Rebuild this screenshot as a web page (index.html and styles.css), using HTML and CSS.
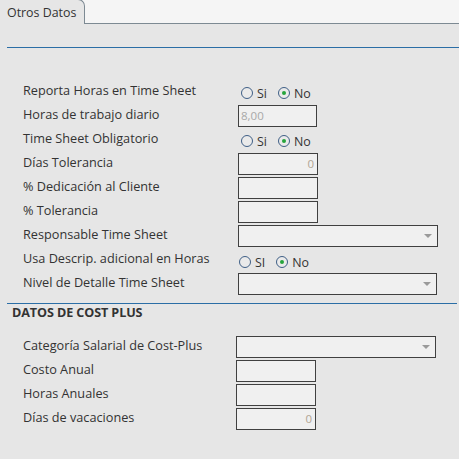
FILE: index.html
```html
<!DOCTYPE html>
<html>
<head>
<meta charset="utf-8">
<link rel="stylesheet" href="styles.css">
</head>
<body>
<div class="tabbar">
  <div class="tab">Otros Datos</div>
  <div class="tab-fill"></div>
</div>
<div class="panel">
  <div class="rule rule-top"></div>
  <div class="section">
    <div class="row">
      <div class="label">Reporta Horas en Time Sheet</div>
      <div class="radios">
        <span class="radio"></span><span class="rtext">Si</span>
        <span class="radio checked"></span><span class="rtext">No</span>
      </div>
    </div>
    <div class="row">
      <div class="label">Horas de trabajo diario</div>
      <div class="input w78 left">8,00</div>
    </div>
    <div class="row">
      <div class="label">Time Sheet Obligatorio</div>
      <div class="radios">
        <span class="radio"></span><span class="rtext">Si</span>
        <span class="radio checked"></span><span class="rtext">No</span>
      </div>
    </div>
    <div class="row">
      <div class="label">Días Tolerancia</div>
      <div class="input w80 right">0</div>
    </div>
    <div class="row">
      <div class="label">% Dedicación al Cliente</div>
      <div class="input w80"></div>
    </div>
    <div class="row">
      <div class="label">% Tolerancia</div>
      <div class="input w80"></div>
    </div>
    <div class="row">
      <div class="label">Responsable Time Sheet</div>
      <div class="input select w200"><span class="arrow"></span></div>
    </div>
    <div class="row">
      <div class="label">Usa Descrip. adicional en Horas</div>
      <div class="radios tight">
        <span class="radio"></span><span class="rtext">SI</span>
        <span class="radio checked"></span><span class="rtext">No</span>
      </div>
    </div>
    <div class="row">
      <div class="label">Nivel de Detalle Time Sheet</div>
      <div class="input select w199"><span class="arrow"></span></div>
    </div>
  </div>
  <div class="rule rule-mid"></div>
  <div class="heading">DATOS DE COST PLUS</div>
  <div class="section cost">
    <div class="row">
      <div class="label">Categoría Salarial de Cost-Plus</div>
      <div class="input select w200"><span class="arrow"></span></div>
    </div>
    <div class="row">
      <div class="label">Costo Anual</div>
      <div class="input w80"></div>
    </div>
    <div class="row">
      <div class="label">Horas Anuales</div>
      <div class="input w80"></div>
    </div>
    <div class="row">
      <div class="label">Días de vacaciones</div>
      <div class="input w80 right">0</div>
    </div>
  </div>
</div>
</body>
</html>
```

FILE: styles.css
```css
html, body {
  margin: 0;
  padding: 0;
  height: 100%;
}
body {
  background: #e6e6e6;
  font-family: "Open Sans", "DejaVu Sans", sans-serif;
  font-size: 12.7px;
  color: #333333;
  overflow: hidden;
}
.tabbar {
  display: flex;
  height: 24px;
  background: #f5f5f5;
}
.tab {
  box-sizing: border-box;
  width: 85px;
  height: 25px;
  margin-top: -1px;
  padding: 4px 0 0 7px;
  background: #e6e6e6;
  border-top: 1px solid #7d8a93;
  border-right: 1px solid #7d8a93;
  border-top-right-radius: 7px;
  font-size: 12.4px;
  color: #333;
  position: relative;
  z-index: 1;
}
.tab-fill {
  flex: 1;
  border-bottom: 1px solid #7d8a93;
}
.panel {
  background: #e6e6e6;
}
.rule {
  border-top: 1px solid #2b6ea6;
  margin-left: 7px;
}
.rule-top {
  margin-top: 23px;
}
.rule-top + .section {
  margin-top: 32px;
}
.section {
  display: flex;
  flex-direction: column;
  padding-left: 23px;
}
.rule-mid {
  margin-top: 7px;
  margin-right: 2px;
}
.row {
  display: flex;
  align-items: center;
  height: 24px;
}
.label {
  width: 215px;
  padding-bottom: 4px;
  white-space: nowrap;
}
.cost .label {
  width: 213px;
}
.heading {
  padding-left: 12px;
  font-weight: bold;
  font-size: 12.6px;
  height: 20px;
  line-height: 18px;
  margin-bottom: 11px;
  letter-spacing: -0.1px;
}
.input {
  box-sizing: border-box;
  height: 22px;
  border: 1px solid #404040;
  background: #f0f0f0;
  font-size: 11.5px;
  line-height: 20px;
  padding: 0 3px 0 2px;
  color: #a8a8a8;
  position: relative;
}
.w78 { width: 79px; }
.w80 { width: 80px; }
.w199 { width: 199px; }
.w200 { width: 200px; }
.left { text-align: left; }
.right { text-align: right; color: #b0a594; }
.arrow {
  position: absolute;
  right: 5px;
  top: 8px;
  width: 0;
  height: 0;
  border-left: 4px solid transparent;
  border-right: 4px solid transparent;
  border-top: 4px solid #9a9a9a;
}
.radios {
  display: flex;
  align-items: center;
  padding-left: 3px;
  padding-top: 2px;
}
.radios.tight {
  padding-left: 1px;
  padding-top: 4px;
}
.radio {
  box-sizing: border-box;
  width: 12px;
  height: 12px;
  border: 1px solid #3f5f86;
  border-radius: 50%;
  background: #eaeaea;
  position: relative;
}
.radio.checked::after {
  content: "";
  position: absolute;
  left: 3px;
  top: 3px;
  width: 4px;
  height: 4px;
  border-radius: 50%;
  background: #26a43c;
}
.rtext {
  margin-left: 4px;
  margin-right: 11px;
  font-size: 12.4px;
}
```
